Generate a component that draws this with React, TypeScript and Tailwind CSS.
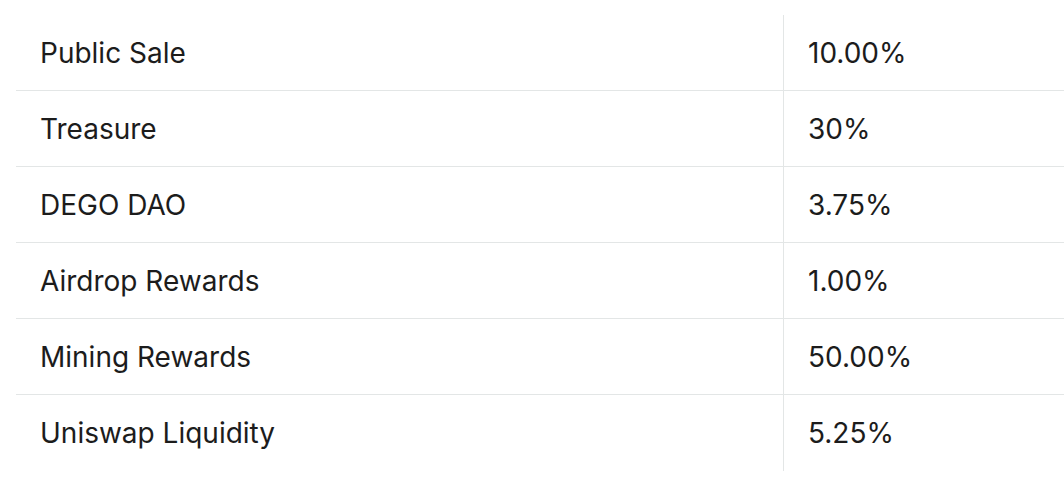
import React from 'react'

type Row = {
  name: string
  share: string
}

const rows: Row[] = [
  { name: 'Public Sale', share: '10.00%' },
  { name: 'Treasure', share: '30%' },
  { name: 'DEGO DAO', share: '3.75%' },
  { name: 'Airdrop Rewards', share: '1.00%' },
  { name: 'Mining Rewards', share: '50.00%' },
  { name: 'Uniswap Liquidity', share: '5.25%' },
]

export default function App() {
  return (
    <div
      className="w-[1064px] h-[480px] bg-white pt-[15px] pl-4 overflow-hidden text-[#1c1c1c]"
      style={{ fontFamily: 'Inter, "Noto Sans", sans-serif' }}
    >
      <div className="flex flex-col">
        {rows.map((row, i) => (
          <div
            key={row.name}
            className={`grid grid-cols-[767px_1fr] h-[76px] ${i < rows.length - 1 ? 'border-b border-[#e3e6e6]' : ''}`}
          >
            <div className="flex items-center pl-6 text-[28px]">{row.name}</div>
            <div className="flex items-center pl-6 text-[28px] border-l border-[#e3e6e6]">
              {row.share}
            </div>
          </div>
        ))}
      </div>
    </div>
  )
}
